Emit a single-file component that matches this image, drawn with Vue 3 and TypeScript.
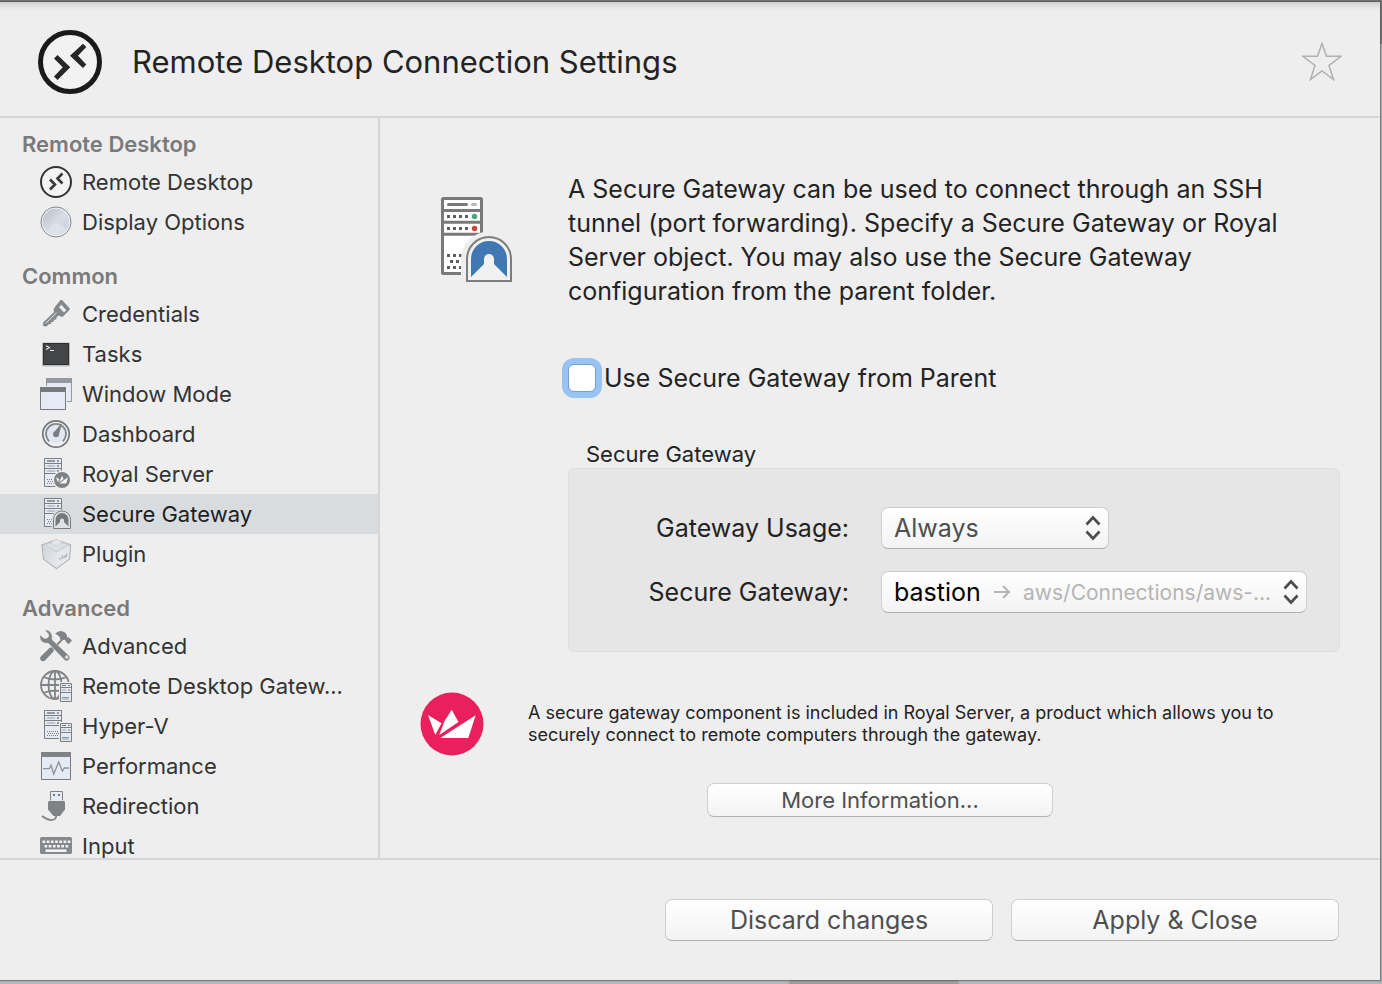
<script setup lang="ts">
import { ref } from 'vue'

interface NavItem {
  label: string
  icon: string
}

interface NavGroup {
  title: string
  items: NavItem[]
}

const groups: NavGroup[] = [
  {
    title: 'Remote Desktop',
    items: [
      { label: 'Remote Desktop', icon: 'rdp' },
      { label: 'Display Options', icon: 'display' },
    ],
  },
  {
    title: 'Common',
    items: [
      { label: 'Credentials', icon: 'key' },
      { label: 'Tasks', icon: 'tasks' },
      { label: 'Window Mode', icon: 'windows' },
      { label: 'Dashboard', icon: 'gauge' },
      { label: 'Royal Server', icon: 'royal' },
      { label: 'Secure Gateway', icon: 'gateway' },
      { label: 'Plugin', icon: 'plugin' },
    ],
  },
  {
    title: 'Advanced',
    items: [
      { label: 'Advanced', icon: 'tools' },
      { label: 'Remote Desktop Gatew...', icon: 'globe' },
      { label: 'Hyper-V', icon: 'hyperv' },
      { label: 'Performance', icon: 'performance' },
      { label: 'Redirection', icon: 'usb' },
      { label: 'Input', icon: 'keyboard' },
    ],
  },
]

const selected = ref('Secure Gateway')
const fromParent = ref(false)
const usage = ref('Always')
const gateway = ref('bastion')
</script>

<template>
  <svg class="sprite" aria-hidden="true">
    <defs>
      <linearGradient id="lens" x1="0" y1="0" x2="1" y2="1">
        <stop offset="0" stop-color="#b9bec6" />
        <stop offset="0.5" stop-color="#d6dbe4" />
        <stop offset="1" stop-color="#cbd1db" />
      </linearGradient>
      <linearGradient id="brickLeft" x1="0" y1="0" x2="1" y2="1">
        <stop offset="0" stop-color="#cfd4d8" />
        <stop offset="1" stop-color="#e6eaee" />
      </linearGradient>
    </defs>

    <symbol id="part-server" viewBox="0 0 18 29">
      <path d="M.5.5h17v28H.5z" fill="#e4ebf4" stroke="#7b7f83" />
      <path d="M0 5.5h18M0 10.5h18M0 15.5h18" stroke="#7b7f83" fill="none" />
      <path d="M3 3h8M13 3h2M13 8h2M13 13h2" stroke="#7b7f83" stroke-width="1.4" />
      <path d="M3 8.5l1-1 1 1 1-1 1 1 1-1 1 1 1-1 1 1M3 13.5l1-1 1 1 1-1 1 1 1-1 1 1 1-1 1 1" stroke="#7b7f83" stroke-width=".8" fill="none" />
      <path d="M3 21.5h12M4 23.5h11M3 25.5h12" stroke="#7b7f83" stroke-dasharray="1 1" />
    </symbol>
    <symbol id="part-mini" viewBox="0 0 12 19">
      <path d="M.5.5h11v18H.5z" fill="#e4ebf4" stroke="#7b7f83" />
      <path d="M0 4.5h12M0 9.5h12" stroke="#7b7f83" />
      <path d="M2 2.5h4M8 2.5h2M8 7h2" stroke="#7b7f83" />
      <path d="M2 7.5l1-1 1 1 1-1 1 1M2 15l1-1 1 1 1-1 1 1 1-1 1 1 1-1M2 16.5l1-1 1 1 1-1 1 1 1-1 1 1 1-1" stroke="#7b7f83" stroke-width=".8" fill="none" />
    </symbol>

    <symbol id="icon-rdp" viewBox="0 0 32 32">
      <circle cx="16" cy="16" r="15" fill="#f4f4f4" stroke="#333" stroke-width="2" />
      <path d="M10 13.5l5 5-5 5M22.5 7.5l-5 5 5 5" fill="none" stroke="#3a3a3a" stroke-width="2.6" />
    </symbol>
    <symbol id="icon-display" viewBox="0 0 32 32">
      <circle cx="16" cy="16" r="15" fill="#f6f8fa" stroke="#7e8286" stroke-width="1" />
      <circle cx="16" cy="16" r="13.4" fill="url(#lens)" />
      <path d="M16 16L7 26a13.4 13.4 0 0 0 20-2.5z" fill="#e2e7f0" opacity=".6" />
    </symbol>
    <symbol id="icon-key" viewBox="0 0 32 32">
      <path d="M20.3 2.2q1-.9 2 0l7.100 7.900q.9 1 0 2l-6.400 6.300q-1 .9-2 0l-2.500-1-2 2-.3 2.200-2.300.2-.2 2-2.300.3-.4 1.900-2.200.3-2 2q-3.500 1-3.900-1.500l.3-2.200 10.900-10.600-.7-2 1.500-3z" fill="#84888b" />
      <path d="M21.3 6.800l5 5.400-2.300 2.300-5-5.300z" fill="#eee" />
      <path d="M5.500 25.500L16.500 14.800" stroke="#e6e8ea" stroke-width="1" />
    </symbol>
    <symbol id="icon-tasks" viewBox="0 0 32 32">
      <path d="M2 4.500h28v24H2z" fill="#b9bbbd" />
      <path d="M3.500 5.500h25v21h-25z" fill="#434547" stroke="#2c2e30" />
      <path d="M6 7.700l3.500 1.800L6 11.500M10 12.500h4" fill="none" stroke="#e6e6e6" stroke-width="1.1" />
    </symbol>
    <symbol id="icon-windows" viewBox="0 0 32 32">
      <path d="M6.500.5h25v23h-25z" fill="#e4ebf4" stroke="#95999d" />
      <path d="M6 0h26v5H6z" fill="#95999d" />
      <path d="M0 8h27v24H0z" fill="#eee" />
      <path d="M.5 9.500h25v22H.5z" fill="#e4ebf4" stroke="#77797c" />
      <path d="M0 9h26v5H0z" fill="#77797c" />
    </symbol>
    <symbol id="icon-gauge" viewBox="0 0 32 32">
      <circle cx="16" cy="16" r="13.2" fill="#f0f2f5" stroke="#74777a" stroke-width="1.7" />
      <circle cx="16" cy="16" r="9.500" fill="#e1e8f2" />
      <path d="M9.300 23.300a10 10 0 1 1 13.400 0" fill="none" stroke="#84878a" stroke-width="1.8" />
      <path d="M13.800 14.500L21 6l.8.500L18.800 17z" fill="#7c7f82" />
      <circle cx="16" cy="16.200" r="3" fill="#7c7f82" />
    </symbol>
    <symbol id="icon-royal" viewBox="0 0 32 32">
      <use href="#part-server" x="4" y="0" width="18" height="29" />
      <circle cx="22" cy="22" r="9.300" fill="#eee" />
      <circle cx="22" cy="22" r="8" fill="#808386" />
      <path d="M16 19.300l3.300 2-1.500 3zM22 17.800l1.600 3.200-4.600 3.500zM28 19.300l-1.800 6.200h-7z" fill="#f4f4f4" />
    </symbol>
    <symbol id="icon-gateway" viewBox="0 0 32 32">
      <use href="#part-server" x="4" y="0" width="18" height="29" />
      <path d="M11.500 32V22a10.500 10.500 0 0 1 21 0v10z" fill="#d8dcde" />
      <path d="M13.500 30.500V21.500a8.500 8.500 0 0 1 17 0v9z" fill="#dfe2e4" stroke="#7b7f83" />
      <path d="M15.500 28.500v-7a6.500 6.500 0 0 1 13 0v7L24 24v-1.500a2 2 0 0 0-4 0V24z" fill="#77797c" />
    </symbol>
    <symbol id="icon-plugin" viewBox="0 0 32 32">
      <path d="M16.500 2L30.500 7l-1 14-13 9.500L3.500 21 2 7z" fill="#dfe3e7" stroke="#a9afb4" stroke-width="1.2" />
      <path d="M2.500 7.500l14 7.300v15L4 20.700z" fill="url(#brickLeft)" />
      <path d="M16.500 14.800l13.500-7.300-1 13.200-12.500 9.300z" fill="#e4e8ed" />
      <path d="M2.500 7l14-4.700L30 7l-13.500 7.500z" fill="#ced4d9" />
      <ellipse cx="16.500" cy="4.500" rx="4.500" ry="2.500" fill="#e2e6ea" />
      <ellipse cx="10.500" cy="7.500" rx="3.500" ry="1.800" fill="#dce1e5" />
      <ellipse cx="22.500" cy="7.500" rx="3.500" ry="1.800" fill="#dce1e5" />
      <ellipse cx="16.500" cy="10" rx="4.500" ry="2" fill="#dce1e5" />
      <path d="M18.500 19.500l2 1-.5 2zM22.500 16.500l1 2-3 3.500zM27.500 14.500l-.8 4.300-5 2.700z" fill="#aeb4b9" />
    </symbol>
    <symbol id="icon-tools" viewBox="0 0 32 32">
      <path d="M13.500 19L12 17.500q-1.300-.6-2.300.3L.8 26.600q-1.500 2 0 3.600l.9.700q1.800 1 3.300-.4l8.500-9q.9-1.200 0-2.500z" fill="#808386" />
      <path d="M15 18.500l-1.500-1.700 7-6.800-.8-3q-2-2.500-4.700-3.200Q20-1.300 25 2.500l1.800 2.300.4 2.700 1.500-.3L32 10.500l-3.500 3.800-3-3-.3-1.600-2.200.3z" fill="#808386" />
      <path d="M4.800.3L8.500 4v2.800L6.800 8.300H4L.2 5q-1.200 5 3 7.500 2.400 1.200 4.800.5L24.500 30q2 2 4.200 0 2.100-2.300.2-4.500L12 9.500Q13 5 10.500 2 8-.7 4.800.3z" fill="#808386" stroke="#eee" stroke-width=".5" />
      <path d="M24.800 27.200h3.800M26.700 25.300v3.800" stroke="#eee" stroke-width="1.2" />
    </symbol>
    <symbol id="icon-globe" viewBox="0 0 32 32">
      <g fill="none" stroke="#808386" stroke-width="1.8">
        <circle cx="15" cy="15" r="14" />
        <ellipse cx="15" cy="15" rx="6.500" ry="14" />
        <path d="M15 1v28M1 15h28M3.500 7q11.500 5 23 0M3.500 23q11.500-5 23 0" />
      </g>
      <path d="M19 12h13v20H19z" fill="#eee" />
      <use href="#part-mini" x="20" y="13" width="12" height="19" />
    </symbol>
    <symbol id="icon-hyperv" viewBox="0 0 32 32">
      <use href="#part-server" x="4" y="0" width="18" height="29" />
      <path d="M19 12h13v20H19z" fill="#eee" />
      <use href="#part-mini" x="20" y="13" width="12" height="19" />
    </symbol>
    <symbol id="icon-performance" viewBox="0 0 32 32">
      <path d="M1.500 2.500h29v27h-29z" fill="#e4ebf4" stroke="#77797c" />
      <path d="M1 2h30v5H1z" fill="#808386" />
      <path d="M3 18.700h6.300l1.700-3.400 2.700 8.700 5-12 3.700 9 2-3H29" fill="none" stroke="#8f9295" stroke-width="1.3" />
    </symbol>
    <symbol id="icon-usb" viewBox="0 0 32 32">
      <path d="M10.500 10.500v-9h12v9" fill="#e4ebf4" stroke="#808386" />
      <path d="M13 4h2v2h-2zM18 4h2v2h-2z" fill="#77797c" />
      <path d="M9 11h15l1 1v7.500L20 26h-6.500L8 19.500V12z" fill="#808386" />
      <path d="M2 26q4.500 3.500 8.500 4 5.500.5 5.800-4.500" fill="none" stroke="#808386" stroke-width="1.8" />
    </symbol>
    <symbol id="icon-keyboard" viewBox="0 0 32 32">
      <rect x="0" y="7" width="32" height="17" rx="1.500" fill="#85898c" />
      <path d="M2.500 11.700h28" stroke="#f2f2f2" stroke-width="2.600" stroke-dasharray="2.700 1.500" />
      <path d="M4.500 16.200h24" stroke="#f2f2f2" stroke-width="2.600" stroke-dasharray="2.700 1.500" />
      <path d="M5.500 20.700h21" stroke="#f2f2f2" stroke-width="2.600" />
    </symbol>
    <symbol id="icon-updown" viewBox="0 0 16 26">
      <path d="M1.500 9.500L8 2.500l6.500 7M1.500 16.500L8 23.500l6.500-7" fill="none" stroke="#4d4d4d" stroke-width="2.600" />
    </symbol>
  </svg>

  <div class="desktop">
    <div class="dialog">
      <header class="header">
        <svg class="logo" viewBox="0 0 64 64" aria-hidden="true">
          <circle cx="32" cy="32" r="29.500" fill="#f2f2f2" stroke="#1a1a1a" stroke-width="5" />
          <path d="M16 28.500l3.500-3.500 12.800 12.300L19.500 50 16 46.500l8.800-9.200zM45 13.700l3.300 3.300-8.300 8.700 8.300 8.800-3.300 3.500-13-12.300z" fill="#262626" />
        </svg>
        <h1>Remote Desktop Connection Settings</h1>
        <button class="favorite" type="button" aria-label="Add to favorites">
          <svg viewBox="0 0 40 40" aria-hidden="true">
            <path d="M20 1.500l4.500 12.800h14.500l-12 9.200L31.500 37.500 20 29l-11.500 8.500L13 23.500 1 14.300h14.500z" fill="none" stroke="#b0b0b0" stroke-width="1.500" />
          </svg>
        </button>
      </header>

      <div class="body">
        <nav class="sidebar" aria-label="Settings">
          <section v-for="group in groups" :key="group.title" class="group">
            <h2>{{ group.title }}</h2>
            <button
              v-for="item in group.items"
              :key="item.label"
              type="button"
              class="item"
              :class="{ active: item.label === selected }"
              @click="selected = item.label"
            >
              <svg class="icon" aria-hidden="true"><use :href="'#icon-' + item.icon" /></svg>
              <span>{{ item.label }}</span>
            </button>
          </section>
        </nav>

        <main class="content">
          <div class="intro">
            <svg class="server" viewBox="0 0 72 86" aria-hidden="true">
              <rect x="1.500" y="1.500" width="39" height="75" rx="1" fill="#fff" stroke="#797979" stroke-width="3" />
              <path d="M1 13.500h40M1 25.300h40M1 37.300h40" stroke="#797979" stroke-width="3" />
              <path d="M7.500 7.500h18" stroke="#797979" stroke-width="3" stroke-linecap="round" />
              <path d="M31.500 7.500h3" stroke="#b9b9b9" stroke-width="3" stroke-linecap="round" />
              <path d="M6 19.500h21M6 31.500h21M6 58.500h21M9 64.500h18M6 70.500h21" stroke="#5e5e5e" stroke-width="3" stroke-dasharray="3 3" />
              <circle cx="33.500" cy="19.500" r="2.700" fill="#45a87c" />
              <circle cx="33.500" cy="31.500" r="2.700" fill="#cf4632" />
              <path d="M20 86V62a28 28 0 0 1 52-14v38z" fill="#eee" />
              <path d="M26 84V62a22 22 0 0 1 44 0v22z" fill="#f1f1f1" stroke="#7d7d7d" stroke-width="2" />
              <path d="M30 80V62a18 18 0 0 1 36 0v18L53 67v-5a5 5 0 0 0-10 0v5z" fill="#3f78b2" />
            </svg>
            <p>
              A Secure Gateway can be used to connect through an SSH<br />
              tunnel (port forwarding). Specify a Secure Gateway or Royal<br />
              Server object. You may also use the Secure Gateway<br />
              configuration from the parent folder.
            </p>
          </div>

          <div class="check">
            <input id="from-parent" v-model="fromParent" type="checkbox" />
            <label for="from-parent">Use Secure Gateway from Parent</label>
          </div>

          <fieldset class="panel">
            <legend>Secure Gateway</legend>
            <div class="form">
              <label for="usage">Gateway Usage:</label>
              <div class="picker short">
                <select id="usage" v-model="usage">
                  <option>Always</option>
                </select>
                <svg class="updown" aria-hidden="true"><use href="#icon-updown" /></svg>
              </div>
              <label for="gateway">Secure Gateway:</label>
              <div class="picker">
                <select id="gateway" v-model="gateway" class="object">
                  <option>bastion</option>
                </select>
                <span class="path">
                  <svg viewBox="0 0 18 16" aria-hidden="true">
                    <path d="M1 8h15M10 2l6 6-6 6" fill="none" stroke="#b5b5b5" stroke-width="2" />
                  </svg>
                  aws/Connections/aws-...
                </span>
                <svg class="updown" aria-hidden="true"><use href="#icon-updown" /></svg>
              </div>
            </div>
          </fieldset>

          <div class="promo">
            <svg viewBox="0 0 64 64" aria-hidden="true">
              <circle cx="32" cy="32" r="31.500" fill="#ea1f5e" />
              <path d="M8 23l13.500 8.300L15.300 43zM31.700 17.700L38.500 30 19.300 43l5-13.500zM55.700 23.300L48.300 46h-28z" fill="#fff" />
            </svg>
            <p>
              A secure gateway component is included in Royal Server, a product which allows you to<br />
              securely connect to remote computers through the gateway.
            </p>
          </div>

          <button class="btn more" type="button">More Information...</button>
        </main>
      </div>

      <footer class="footer">
        <button class="btn" type="button">Discard changes</button>
        <button class="btn" type="button">Apply &amp; Close</button>
      </footer>
    </div>
  </div>
</template>

<style>
body {
  margin: 0;
}
</style>

<style scoped>
* {
  box-sizing: border-box;
}

h1,
h2,
p {
  margin: 0;
  font-weight: 400;
}

button,
select {
  font: inherit;
  margin: 0;
}

.sprite {
  position: absolute;
  width: 0;
  height: 0;
}

.desktop {
  height: 100vh;
  padding: 2px 2px 4px 0;
  background:
    radial-gradient(ellipse 86px 22px at 874px 100%, #9b9d9f 98%, transparent) no-repeat 0 100% / 100% 4px,
    linear-gradient(#777 0 44px, #b4b7b9 44px);
  font-family: Inter, 'Liberation Sans', sans-serif;
  color: #232323;
}

.dialog {
  display: flex;
  flex-direction: column;
  height: 100%;
  background: #eee;
  box-shadow: 0 0 1px 1px rgba(80, 80, 80, 0.6);
}

.header {
  display: flex;
  align-items: center;
  flex: none;
  height: 116px;
  padding: 6px 38px 0 38px;
  border-bottom: 2px solid #d6d6d6;
  background: linear-gradient(#cfd0d0, #e6e7e7 6px, #eee 9px);
}

.logo {
  width: 64px;
  height: 64px;
}

h1 {
  flex: 1;
  margin-left: 30px;
  font-size: 31px;
  line-height: 40px;
}

.favorite {
  width: 40px;
  height: 40px;
  padding: 0;
  border: 0;
  background: none;
}

.favorite svg {
  display: block;
}

.body {
  display: flex;
  flex: 1;
  min-height: 0;
}

.sidebar {
  flex: none;
  width: 380px;
  padding-top: 8px;
  border-right: 2px solid #d6d6d6;
  overflow: hidden;
}

.group + .group {
  margin-top: 16px;
}

h2 {
  padding-left: 22px;
  font-size: 22px;
  font-weight: 600;
  line-height: 36px;
  color: #7a7a7a;
}

.item {
  display: flex;
  align-items: center;
  gap: 10px;
  width: 100%;
  height: 40px;
  padding: 0 0 0 40px;
  border: 0;
  background: none;
  font-size: 22px;
  color: #333;
  text-align: left;
  white-space: nowrap;
}

.item.active {
  background: #d8dcde;
  color: #1e1e1e;
}

.icon {
  flex: none;
  width: 32px;
  height: 32px;
}

.content {
  flex: 1;
  min-width: 0;
  padding: 54px 40px 0;
  overflow: hidden;
}

.intro {
  display: grid;
  grid-template-columns: 148px 1fr;
  align-items: center;
  font-size: 25px;
  line-height: 34px;
}

.intro p {
  white-space: nowrap;
}

.server {
  width: 72px;
  height: 86px;
  margin-left: 21px;
}

.check {
  display: flex;
  align-items: center;
  gap: 8px;
  height: 40px;
  margin: 50px 0 0 148px;
  font-size: 25px;
}

.check input {
  appearance: none;
  width: 28px;
  height: 28px;
  margin: 0;
  border: 1px solid #6f9fd6;
  border-radius: 6px;
  background: #fff;
  box-shadow: 0 0 0 6px #98c3f3;
}

.check input:checked {
  background: #3f78b2;
}

.panel {
  min-width: 0;
  margin: 42px 0 0 148px;
  padding: 0;
  border: 0;
}

legend {
  padding: 0 18px;
  font-size: 22px;
  line-height: 28px;
}

.form {
  display: grid;
  grid-template-columns: 280px 1fr;
  align-items: center;
  gap: 22px 32px;
  padding: 38px 32px 38px 0;
  border: 1px solid #dedede;
  border-radius: 6px;
  background: #e6e6e6;
  font-size: 25px;
}

.form label {
  text-align: right;
}

.picker {
  display: grid;
  grid-template-columns: 1fr 16px 8px;
  align-items: center;
  height: 42px;
}

.picker.short {
  width: 228px;
}

.picker select {
  grid-area: 1 / 1 / 2 / -1;
  appearance: none;
  width: 100%;
  height: 42px;
  padding: 0 12px;
  color: #4f4f4f;
}

.picker select.object {
  color: #000;
}

.picker select,
.btn {
  border: 1px solid #cfcfcf;
  border-bottom-color: #b0b0b0;
  border-radius: 7px;
  background: linear-gradient(#fff, #f3f3f3);
}

.path {
  grid-area: 1 / 1 / 2 / 2;
  display: flex;
  align-items: center;
  gap: 12px;
  margin-left: 112px;
  font-size: 21px;
  color: #b5b5b5;
  white-space: nowrap;
  pointer-events: none;
}

.path svg {
  width: 18px;
  height: 16px;
}

.updown {
  grid-area: 1 / 2 / 2 / 3;
  width: 16px;
  height: 26px;
  pointer-events: none;
}

.promo {
  display: flex;
  align-items: center;
  gap: 44px;
  margin-top: 40px;
  font-size: 18px;
  font-optical-sizing: none;
  line-height: 22px;
  white-space: nowrap;
}

.promo svg {
  flex: none;
  width: 64px;
  height: 64px;
}

.btn {
  width: 328px;
  height: 42px;
  padding: 0;
  font-size: 25px;
  color: #4f4f4f;
}

.btn.more {
  display: block;
  width: 346px;
  height: 34px;
  margin: 27px auto 0;
  font-size: 22px;
}

.footer {
  display: flex;
  align-items: center;
  justify-content: flex-end;
  flex: none;
  gap: 18px;
  height: 122px;
  padding-right: 41px;
  border-top: 2px solid #d6d6d6;
}
</style>
